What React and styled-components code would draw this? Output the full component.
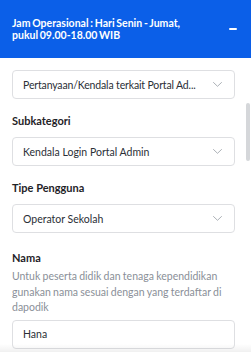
import React from "react";
import styled, { createGlobalStyle } from "styled-components";

const Global = createGlobalStyle`
  html, body { margin: 0; padding: 0; background: #ffffff; }
  body { font-family: Lato, "Noto Sans", sans-serif; -webkit-font-smoothing: antialiased; }
  * { box-sizing: border-box; }
`;

const Widget = styled.div`
  position: relative;
  width: 251px;
  height: 352px;
  overflow: hidden;
  background: #fff;
  display: flex;
  flex-direction: column;
`;

const Header = styled.div`
  height: 58px;
  flex-shrink: 0;
  background: #0b5fe8;
  display: flex;
  align-items: center;
  justify-content: space-between;
  padding: 0 14px 0 12px;
  color: #fff;
`;

const Title = styled.div`
  font-size: 10.5px;
  font-weight: 700;
  line-height: 12.5px;
  word-spacing: -0.8px;
  white-space: nowrap;
`;

const Minimize = styled.span`
  width: 8px;
  height: 2px;
  background: #fff;
  border-radius: 1px;
`;

const Body = styled.div`
  flex: 1;
  padding: 12px 16px 0 12px;
  display: flex;
  flex-direction: column;
`;

const Field = styled.div`
  display: flex;
  flex-direction: column;
  margin-top: ${(p) => p.$gap}px;
`;

const Label = styled.div`
  font-size: 11px;
  font-weight: 700;
  line-height: 16px;
  color: #1f2328;
  margin-bottom: ${(p) => (p.$tight ? 3 : 8)}px;
`;

const Hint = styled.div`
  font-size: 10.5px;
  line-height: 15.5px;
  word-spacing: -0.4px;
  color: #8a8f98;
  margin-bottom: 4px;
`;

const Select = styled.div`
  height: 29px;
  border: 1px solid #dedfe2;
  border-radius: 4px;
  display: flex;
  align-items: center;
  justify-content: space-between;
  padding: 0 12px 0 10px;
  font-size: 10.5px;
  color: #2b2f36;
`;

const SelectText = styled.span`
  white-space: nowrap;
  flex: 1;
  min-width: 0;
  letter-spacing: ${(p) => (p.$narrow ? "-0.15px" : "0")};
`;

const Input = styled.div`
  height: 29px;
  border: 1px solid #dedfe2;
  border-radius: 4px;
  display: flex;
  align-items: center;
  padding: 0 10px;
  font-size: 10.5px;
  color: #2b2f36;
`;

const ScrollThumb = styled.div`
  position: absolute;
  left: 246px;
  top: 103px;
  width: 4px;
  height: 58px;
  border-radius: 2px;
  background: #d5d7da;
`;

const BottomShade = styled.div`
  position: absolute;
  left: 0;
  right: 0;
  bottom: 0;
  height: 8px;
  background: linear-gradient(to bottom, rgba(0,0,0,0), rgba(0,0,0,0.06));
  pointer-events: none;
`;

const Chevron = () => (
  <svg width="9" height="5" viewBox="0 0 9 5" fill="none">
    <path d="M0.5 0.5 L4.5 4.3 L8.5 0.5" stroke="#a3a8af" strokeWidth="0.9" strokeLinecap="round" strokeLinejoin="round" />
  </svg>
);

const SelectBox = ({ children, narrow }) => (
  <Select>
    <SelectText $narrow={narrow}>{children}</SelectText>
    <Chevron />
  </Select>
);

export default function App() {
  return (
    <>
      <Global />
      <Widget>
        <Header>
          <Title>
            Jam Operasional : Hari Senin - Jumat,
            <br />
            pukul 09.00-18.00 WIB
          </Title>
          <Minimize />
        </Header>
        <Body>
          <Field $gap={0}>
            <SelectBox narrow>Pertanyaan/Kendala terkait Portal Ad...</SelectBox>
          </Field>
          <Field $gap={14}>
            <Label>Subkategori</Label>
            <SelectBox>Kendala Login Portal Admin</SelectBox>
          </Field>
          <Field $gap={14}>
            <Label>Tipe Pengguna</Label>
            <SelectBox>Operator Sekolah</SelectBox>
          </Field>
          <Field $gap={17}>
            <Label $tight>Nama</Label>
            <Hint>Untuk peserta didik dan tenaga kependidikan gunakan nama sesuai dengan yang terdaftar di dapodik</Hint>
            <Input>Hana</Input>
          </Field>
        </Body>
        <ScrollThumb />
        <BottomShade />
      </Widget>
    </>
  );
}
